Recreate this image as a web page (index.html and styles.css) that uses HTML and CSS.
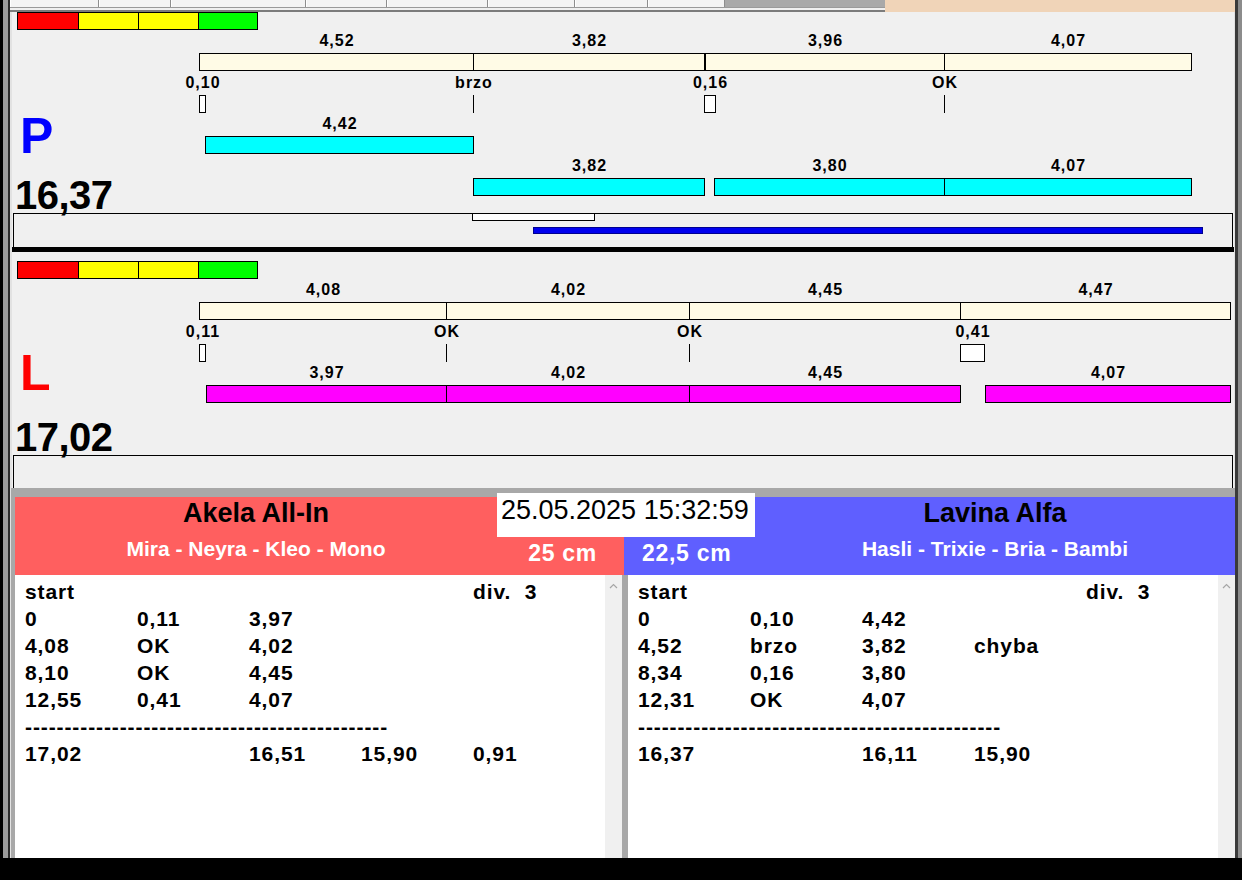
FILE: index.html
```html
<!DOCTYPE html>
<html lang="sk">
<head>
<meta charset="utf-8">
<title>Agility timing</title>
<link rel="stylesheet" href="styles.css">
</head>
<body>
<div class="app">
  <div class="window">
    <div class="edge-left"></div>
    <div class="main">
      <div class="tabs">
        <div class="tabgroup">
          <div class="tabrow">
            <span class="tab t1"></span>
            <span class="tab t2"></span>
            <span class="tab t3"></span>
            <span class="tab t4"></span>
            <span class="tab t5"></span>
            <span class="tab t6"></span>
            <span class="tab t7"></span>
            <span class="tab t8"></span>
            <span class="tab-dark"></span>
          </div>
          <div class="tabbase"></div>
        </div>
        <div class="peach"></div>
      </div>

      <section class="lane lane-p">
        <div class="lane-main">
          <div class="head">
            <div class="rating"><span class="r-red"></span><span class="r-yel"></span><span class="r-yel"></span><span class="r-grn"></span></div>
            <div class="letter letter-p">P</div>
            <div class="score">16,37</div>
          </div>
          <div class="chart">
            <div class="bar cream" style="left:187px;top:41px;width:275px"><span class="lbl">4,52</span></div>
            <div class="bar cream" style="left:461px;top:41px;width:232px"><span class="lbl">3,82</span></div>
            <div class="bar cream" style="left:693px;top:41px;width:240px"><span class="lbl">3,96</span></div>
            <div class="bar cream" style="left:932px;top:41px;width:248px"><span class="lbl">4,07</span></div>

            <div class="mark" style="left:187px;top:83px;width:7px"><span class="lbl">0,10</span></div>
            <div class="mark line" style="left:461px;top:83px"><span class="lbl">brzo</span></div>
            <div class="mark" style="left:692px;top:83px;width:12px"><span class="lbl">0,16</span></div>
            <div class="mark line" style="left:932px;top:83px"><span class="lbl">OK</span></div>

            <div class="bar cyan" style="left:193px;top:124px;width:269px"><span class="lbl">4,42</span></div>
            <div class="bar cyan" style="left:461px;top:166px;width:232px"><span class="lbl">3,82</span></div>
            <div class="bar cyan" style="left:702px;top:166px;width:231px"><span class="lbl">3,80</span></div>
            <div class="bar cyan" style="left:932px;top:166px;width:248px"><span class="lbl">4,07</span></div>
          </div>
        </div>
        <div class="lane-box box-p">
          <div class="gap-bar" style="left:458px;width:123px"></div>
          <div class="progress" style="left:519px;width:670px"></div>
        </div>
      </section>

      <div class="sep"></div>

      <section class="lane lane-l">
        <div class="lane-main">
          <div class="head">
            <div class="rating"><span class="r-red"></span><span class="r-yel"></span><span class="r-yel"></span><span class="r-grn"></span></div>
            <div class="letter letter-l">L</div>
            <div class="score">17,02</div>
          </div>
          <div class="chart">
            <div class="bar cream" style="left:187px;top:50px;width:248px"><span class="lbl">4,08</span></div>
            <div class="bar cream" style="left:434px;top:50px;width:244px"><span class="lbl">4,02</span></div>
            <div class="bar cream" style="left:677px;top:50px;width:272px"><span class="lbl">4,45</span></div>
            <div class="bar cream" style="left:948px;top:50px;width:271px"><span class="lbl">4,47</span></div>

            <div class="mark" style="left:187px;top:92px;width:7px"><span class="lbl">0,11</span></div>
            <div class="mark line" style="left:434px;top:92px"><span class="lbl">OK</span></div>
            <div class="mark line" style="left:677px;top:92px"><span class="lbl">OK</span></div>
            <div class="mark" style="left:948px;top:92px;width:25px"><span class="lbl">0,41</span></div>

            <div class="bar magenta" style="left:194px;top:133px;width:241px"><span class="lbl">3,97</span></div>
            <div class="bar magenta" style="left:434px;top:133px;width:244px"><span class="lbl">4,02</span></div>
            <div class="bar magenta" style="left:677px;top:133px;width:272px"><span class="lbl">4,45</span></div>
            <div class="bar magenta" style="left:973px;top:133px;width:246px"><span class="lbl">4,07</span></div>
          </div>
        </div>
        <div class="lane-box box-l"></div>
      </section>

      <div class="bottom">
        <div class="header">
          <div class="name name-l">Akela All-In</div>
          <div class="date">25.05.2025 15:32:59</div>
          <div class="name name-r">Lavina Alfa</div>
          <div class="sub sub-l">Mira - Neyra - Kleo - Mono</div>
          <div class="height height-l">25 cm</div>
          <div class="height height-r">22,5 cm</div>
          <div class="sub sub-r">Hasli - Trixie - Bria - Bambi</div>
        </div>
        <div class="panels">
          <div class="panel">
            <div class="text">
              <div class="row"><span>start</span><span></span><span></span><span></span><span>div.  3</span></div>
              <div class="row"><span>0</span><span>0,11</span><span>3,97</span></div>
              <div class="row"><span>4,08</span><span>OK</span><span>4,02</span></div>
              <div class="row"><span>8,10</span><span>OK</span><span>4,45</span></div>
              <div class="row"><span>12,55</span><span>0,41</span><span>4,07</span></div>
              <div class="row"><span class="dash">----------------------------------------------</span></div>
              <div class="row"><span>17,02</span><span></span><span>16,51</span><span>15,90</span><span>0,91</span></div>
            </div>
            <div class="scroll"><svg width="17" height="17" viewBox="0 0 17 17"><polyline points="5,10 8.5,6.5 12,10" fill="none" stroke="#a6a6a6" stroke-width="1.2"/></svg></div>
          </div>
          <div class="panel">
            <div class="text">
              <div class="row"><span>start</span><span></span><span></span><span></span><span>div.  3</span></div>
              <div class="row"><span>0</span><span>0,10</span><span>4,42</span></div>
              <div class="row"><span>4,52</span><span>brzo</span><span>3,82</span><span>chyba</span></div>
              <div class="row"><span>8,34</span><span>0,16</span><span>3,80</span></div>
              <div class="row"><span>12,31</span><span>OK</span><span>4,07</span></div>
              <div class="row"><span class="dash">----------------------------------------------</span></div>
              <div class="row"><span>16,37</span><span></span><span>16,11</span><span>15,90</span></div>
            </div>
            <div class="scroll"><svg width="17" height="17" viewBox="0 0 17 17"><polyline points="5,10 8.5,6.5 12,10" fill="none" stroke="#a6a6a6" stroke-width="1.2"/></svg></div>
          </div>
        </div>
      </div>
    </div>
    <div class="edge-right"></div>
  </div>
  <div class="footer"></div>
</div>
</body>
</html>
```

FILE: styles.css
```css
* { box-sizing: border-box; }
html, body { margin: 0; padding: 0; }
body {
  width: 1242px;
  height: 880px;
  overflow: hidden;
  background: #000;
  font-family: "Liberation Sans", Arial, sans-serif;
  color: #000;
}
.app { width: 1242px; height: 880px; display: flex; flex-direction: column; }
.window { display: flex; height: 858px; }
.edge-left {
  width: 10px;
  background: linear-gradient(to right, #000 0 3px, #9c9c9c 3px 8px, #2c2c2c 8px 10px);
}
.edge-right {
  width: 7px;
  background: linear-gradient(to right, #3a3a3a 0 3px, #8c8c8c 3px 7px);
}
.main { width: 1225px; display: flex; flex-direction: column; background: #e2e2e2; }
.footer { height: 22px; background: #000; }

/* tab strip */
.tabs { height: 12px; flex: none; display: flex; }
.tabgroup { width: 875px; display: flex; flex-direction: column; }
.tabrow { height: 8px; display: flex; background: #f4f4f4; border-bottom: 1px solid #9a9a9a; }
.tab {
  height: 7px;
  border-right: 1px solid #8e8e8e;
  box-shadow: inset 1px 0 0 #fff;
}
.t1 { width: 89px; }
.t2 { width: 72px; }
.t3 { width: 135px; }
.t4 { width: 81px; }
.t5 { width: 101px; }
.t6 { width: 87px; }
.t7 { width: 73px; }
.t8 { width: 77px; }
.tab-dark { width: 160px; height: 7px; background: #a9a9a9; }
.tabbase { height: 4px; background: linear-gradient(#f0f0f0 0 2px, #7c7c7c 2px 4px); }
.peach { width: 350px; height: 12px; background: #f0d4b8; }

/* lanes */
.lane { flex: none; margin: 0 1px 0 2px; background: #f0f0f0; display: flex; flex-direction: column; }
.lane-p { height: 235px; }
.lane-l { height: 236px; }
.lane-main { position: relative; flex: 1 1 0; min-height: 0; }
.sep { flex: none; height: 5px; margin: 0 1px 0 2px; background: #000; }

.head { display: flex; flex-direction: column; align-items: flex-start; padding-left: 5px; }
.lane-l .head { padding-top: 9px; }
.rating { display: flex; height: 18px; border: 1px solid #000; }
.rating span { width: 60px; border-left: 1px solid #000; }
.rating span:first-child { border-left: 0; }
.rating span:last-child { width: 59px; }
.r-red { background: #ff0000; }
.r-yel { background: #ffff00; }
.r-grn { background: #00ff00; }

.letter { font-size: 50px; line-height: 50px; font-weight: bold; margin-left: 3px; }
.letter-p { color: #0000ff; margin-top: 81px; }
.letter-l { color: #ff0000; margin-top: 69px; }
.score {
  font-size: 40px;
  line-height: 41px;
  font-weight: bold;
  margin-left: -2px;
  margin-top: 14px;
  letter-spacing: -0.5px;
}
.lane-l .score { margin-top: 19px; }

.chart { position: absolute; inset: 0; }
.bar, .mark { position: absolute; height: 18px; border: 1px solid #000; }
.cream { background: #fffbe6; }
.cyan { background: #00ffff; }
.magenta { background: #ff00ff; }
.mark { background: #fff; }
.mark.line { width: 1px; border: 0; background: #000; }
.lbl {
  position: absolute;
  bottom: calc(100% + 5.5px);
  left: 50%;
  transform: translateX(-50%);
  padding-left: 1px;
  font-size: 16px;
  line-height: 16px;
  font-weight: bold;
  letter-spacing: 1px;
  white-space: nowrap;
}
.mark.line .lbl { bottom: calc(100% + 4.5px); }

.lane-box { flex: none; position: relative; margin: 0 1px; border: 1px solid #000; border-bottom: 0; }
.box-p { height: 34px; }
.box-l { height: 33px; }
.gap-bar { position: absolute; top: -1px; height: 8px; background: #fff; border: 1px solid #000; }
.progress { position: absolute; top: 13px; height: 7px; background: #0000ee; border: 1px solid #000090; }

/* bottom */
.bottom {
  flex: 1;
  margin-left: 1px;
  background: #a8a8a8;
  padding: 9px 0 0 4px;
  display: flex;
  flex-direction: column;
}
.header {
  display: grid;
  grid-template-columns: 482px 127px 131px 480px;
  grid-template-rows: 40px 38px;
  background: linear-gradient(to right, #ff5f5f 0 609px, #5f5fff 609px);
}
.name { font-size: 27px; line-height: 32px; font-weight: bold; text-align: center; }
.name-l { grid-column: 1; grid-row: 1; }
.name-r { grid-column: 4; grid-row: 1; }
.date {
  grid-column: 2 / 4;
  grid-row: 1;
  margin-top: -4px;
  height: 44px;
  background: #fff;
  font-size: 27px;
  line-height: 28px;
  padding: 3px 0 0 4px;
  white-space: nowrap;
}
.sub { font-size: 21px; line-height: 24px; font-weight: bold; color: #fff; text-align: center; white-space: nowrap; }
.sub-l { grid-column: 1; grid-row: 2; }
.sub-r { grid-column: 4; grid-row: 2; }
.height {
  grid-row: 2;
  font-size: 23px;
  line-height: 26px;
  font-weight: bold;
  color: #fff;
  letter-spacing: 0.7px;
  padding-top: 3px;
  white-space: nowrap;
}
.height-l { grid-column: 2; text-align: right; padding-right: 27px; }
.height-r { grid-column: 3; padding-left: 18px; }

.panels { display: flex; gap: 6px; height: 283px; }
.panel { width: 607px; display: flex; background: #fff; }
.text { flex: 1; padding: 3px 0 0 10px; }
.scroll { width: 17px; background: #f0f0f0; }
.scroll svg { display: block; margin-top: 3px; }
.row {
  display: grid;
  grid-template-columns: repeat(5, 112px);
  height: 27px;
  font-size: 21px;
  line-height: 27px;
  font-weight: bold;
  letter-spacing: 0.9px;
  white-space: pre;
}
.dash { grid-column: 1 / -1; overflow: hidden; }
```
